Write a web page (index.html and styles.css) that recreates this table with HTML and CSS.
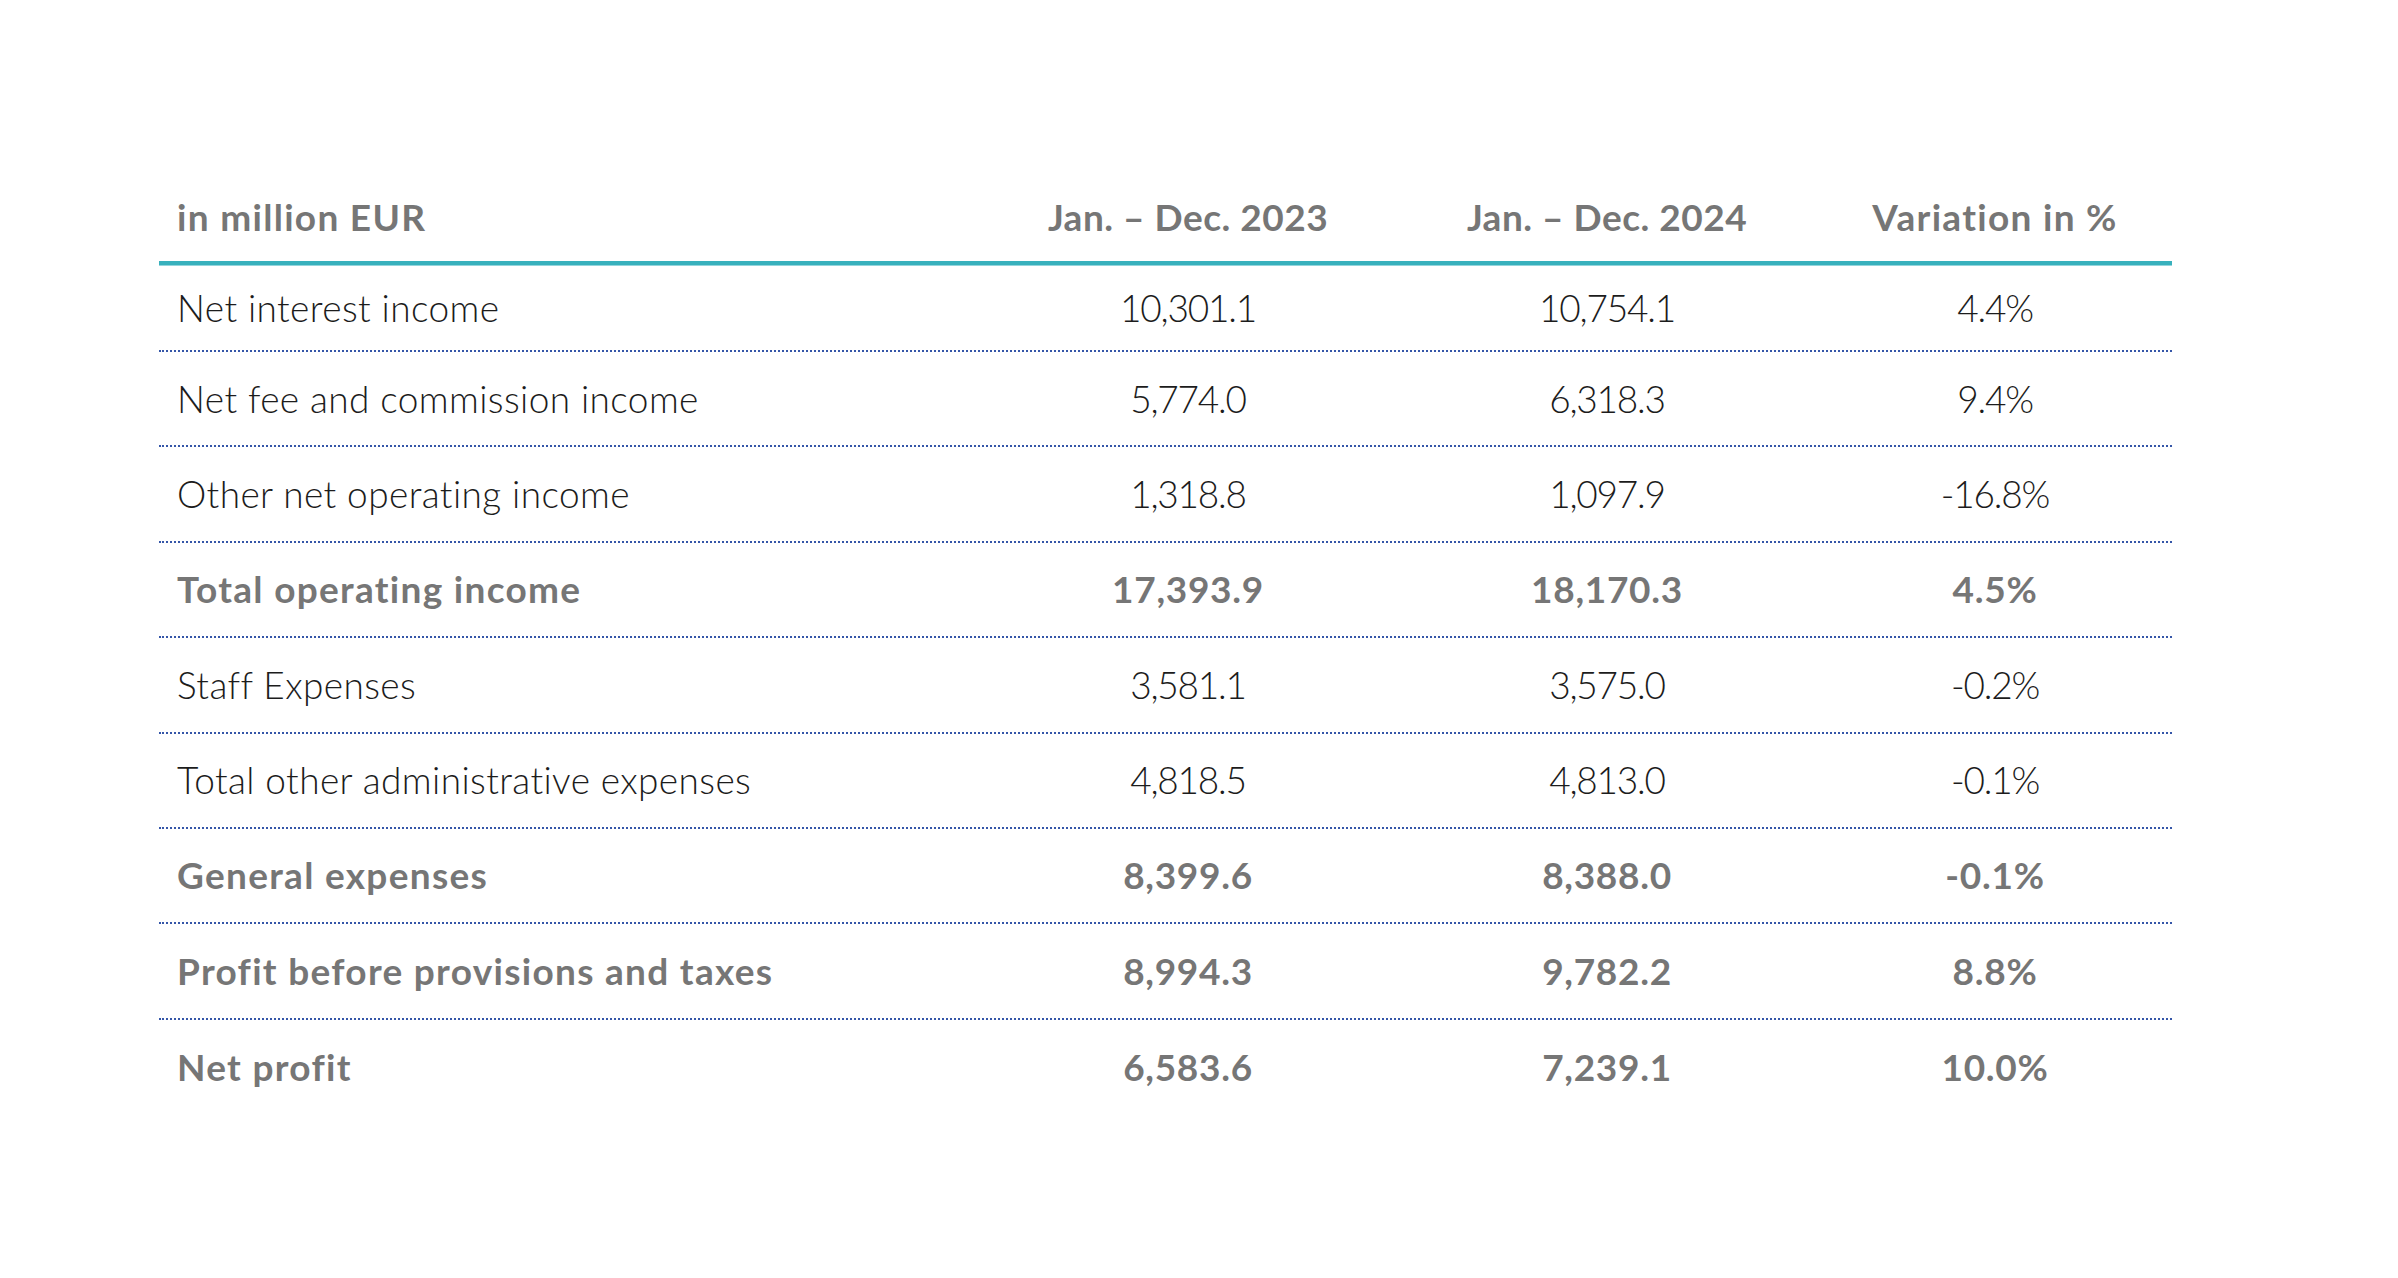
FILE: index.html
```html
<!DOCTYPE html>
<html lang="en">
<head>
<meta charset="utf-8">
<title>Key figures</title>
<link rel="stylesheet" href="styles.css">
</head>
<body>
<main class="page">
  <div class="fin-table">
    <div class="row head">
      <div class="cell label">in million EUR</div>
      <div class="cell period">Jan. – Dec. 2023</div>
      <div class="cell period">Jan. – Dec. 2024</div>
      <div class="cell">Variation in %</div>
    </div>
    <div class="row first">
      <div class="cell label">Net interest income</div>
      <div class="cell num">10,301.1</div>
      <div class="cell num">10,754.1</div>
      <div class="cell num">4.4%</div>
    </div>
    <div class="row">
      <div class="cell label">Net fee and commission income</div>
      <div class="cell num">5,774.0</div>
      <div class="cell num">6,318.3</div>
      <div class="cell num">9.4%</div>
    </div>
    <div class="row">
      <div class="cell label">Other net operating income</div>
      <div class="cell num">1,318.8</div>
      <div class="cell num">1,097.9</div>
      <div class="cell num">-16.8%</div>
    </div>
    <div class="row total">
      <div class="cell label">Total operating income</div>
      <div class="cell num">17,393.9</div>
      <div class="cell num">18,170.3</div>
      <div class="cell num">4.5%</div>
    </div>
    <div class="row">
      <div class="cell label">Staff Expenses</div>
      <div class="cell num">3,581.1</div>
      <div class="cell num">3,575.0</div>
      <div class="cell num">-0.2%</div>
    </div>
    <div class="row">
      <div class="cell label">Total other administrative expenses</div>
      <div class="cell num">4,818.5</div>
      <div class="cell num">4,813.0</div>
      <div class="cell num">-0.1%</div>
    </div>
    <div class="row total">
      <div class="cell label">General expenses</div>
      <div class="cell num">8,399.6</div>
      <div class="cell num">8,388.0</div>
      <div class="cell num">-0.1%</div>
    </div>
    <div class="row total">
      <div class="cell label">Profit before provisions and taxes</div>
      <div class="cell num">8,994.3</div>
      <div class="cell num">9,782.2</div>
      <div class="cell num">8.8%</div>
    </div>
    <div class="row total last">
      <div class="cell label">Net profit</div>
      <div class="cell num">6,583.6</div>
      <div class="cell num">7,239.1</div>
      <div class="cell num">10.0%</div>
    </div>
  </div>
</main>
</body>
</html>
```

FILE: styles.css
```css
html, body {
  margin: 0;
  padding: 0;
  background: #ffffff;
}

.page {
  padding: 195px 0 0 159px;
  font-family: Lato, "Liberation Sans", sans-serif;
}

.fin-table {
  width: 2013px;
  display: flex;
  flex-direction: column;
}

.row {
  display: grid;
  grid-template-columns: 821px 416px 422px 354px;
  align-items: center;
  height: 95.4px;
  box-sizing: border-box;
  border-bottom: 2px dotted #3556a8;
  font-size: 37px;
  font-weight: 300;
  color: #1c1c1c;
  line-height: 1.2;
}

.row.first {
  height: 86px;
}

.row.last {
  border-bottom: none;
}

.row.head {
  height: 66px;
  align-items: start;
  border-bottom: none;
  position: relative;
  font-weight: 700;
  color: #767676;
}

.row.head::after {
  content: "";
  position: absolute;
  left: 0;
  right: 0;
  bottom: -5px;
  height: 5px;
  background: linear-gradient(to bottom, #38b1bd 0, #38b1bd 4px, #94d5dc 4px);
}

.row.head + .row {
  margin-top: 5px;
}

.row.total {
  font-weight: 700;
  color: #767676;
}

.cell {
  text-align: center;
  white-space: nowrap;
}

.cell.label {
  text-align: left;
  padding-left: 18px;
  letter-spacing: 0.4px;
}

.cell.num {
  letter-spacing: -1.2px;
}

.row.total .cell.label,
.row.head .cell {
  letter-spacing: 1.3px;
}

.row.total .cell.num {
  letter-spacing: 0.7px;
}

.row.head .cell.period {
  letter-spacing: 0.5px;
}
```
